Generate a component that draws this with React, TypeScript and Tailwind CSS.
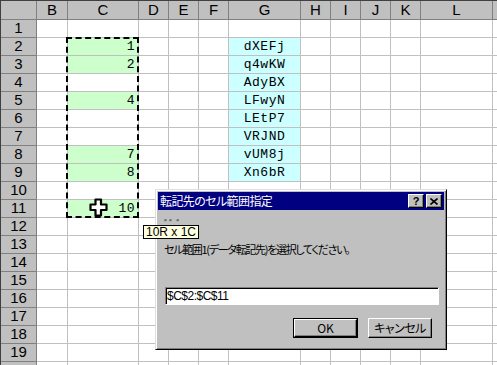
import React from "react";

const cols = ["", "B", "C", "D", "E", "F", "G", "H", "I", "J", "K", "L", ""];
const cData: Record<number, string> = { 2: "1", 3: "2", 5: "4", 8: "7", 9: "8", 11: "10" };
const gData: Record<number, string> = {
  2: "dXEFj",
  3: "q4wKW",
  4: "AdyBX",
  5: "LFwyN",
  6: "LEtP7",
  7: "VRJND",
  8: "vUM8j",
  9: "Xn6bR",
};

const hdrFont = "font-['Liberation_Sans','Noto_Sans_CJK_JP',sans-serif]";
const jpFont = "font-['Noto_Sans_CJK_JP',sans-serif] [font-feature-settings:'palt']";

function Bevel({ children, className = "" }: { children?: React.ReactNode; className?: string }) {
  return (
    <div
      className={`bg-[#c0c0c0] border border-t-white border-l-white border-r-black border-b-black shadow-[inset_-1px_-1px_#808080] flex items-center justify-center ${className}`}
    >
      {children}
    </div>
  );
}

export default function App() {
  const rows = Array.from({ length: 20 }, (_, i) => i + 1);
  return (
    <div className="relative w-[497px] h-[365px] overflow-hidden bg-white">
      <div className="grid grid-cols-[36px_31px_71px_30px_30px_30px_72px_30px_30px_30px_30px_72px_20px] grid-rows-[19px] auto-rows-[18px] border-l border-t border-[#404040]">
        {cols.map((c, i) => (
          <div
            key={"h" + i}
            className={`bg-[#c0c0c0] border-r border-b border-[#808080] flex items-center justify-center text-[15px] text-black ${hdrFont}`}
          >
            {c}
          </div>
        ))}
        {rows.map((r) => (
          <React.Fragment key={r}>
            <div
              className={`bg-[#c0c0c0] border-r border-b border-[#808080] flex items-center justify-center text-[15px] text-black ${hdrFont}`}
            >
              {r}
            </div>
            {cols.slice(1).map((c, ci) => {
              let bg = "bg-white";
              let content: React.ReactNode = null;
              let align = "justify-end pr-[3px]";
              if (c === "C" && cData[r]) {
                bg = "bg-[#ccffcc]";
                content = cData[r];
              }
              if (c === "G" && gData[r]) {
                bg = "bg-[#ccffff]";
                content = gData[r];
                align = "justify-center";
              }
              return (
                <div
                  key={ci}
                  className={`${bg} border-r border-b border-[#c0c0c0] flex items-center ${align} text-[13px] text-black font-['Liberation_Mono',monospace] tracking-[0.5px]`}
                >
                  {content}
                </div>
              );
            })}
          </React.Fragment>
        ))}
      </div>

      {/* marching ants around C2:C11 */}
      <div className="absolute left-[66px] top-[37px] w-[73px] h-[181px] border-2 border-dashed border-black pointer-events-none" />

      {/* cursor */}
      <svg className="absolute left-[89px] top-[198px]" width="19" height="19" viewBox="0 0 19 19">
        <path
          d="M6.5 1.5 H12 V6.5 H17.5 V12 H12 V17.5 H6.5 V12 H1.5 V6.5 H6.5 Z"
          fill="white"
          stroke="black"
          strokeWidth="2.2"
          strokeLinejoin="round"
        />
      </svg>

      {/* dialog */}
      <div className="absolute left-[155px] top-[189px] w-[292px] h-[161px] bg-[#c0c0c0] border border-t-[#dfdfdf] border-l-[#dfdfdf] border-r-black border-b-black shadow-[inset_1px_1px_#fff,inset_-1px_-1px_#808080] p-[2px] flex flex-col">
        <div className="h-[18px] bg-[#000080] flex items-center pl-[2px] pr-[2px]">
          <span className={`text-white text-[12px] leading-none tracking-[-0.6px] ${jpFont}`}>転記先のセル範囲指定</span>
          <div className="ml-auto flex gap-[2px]">
            <Bevel className="w-[16px] h-[14px]">
              <span className="text-[11px] font-bold leading-none text-black font-['Liberation_Sans',sans-serif]">?</span>
            </Bevel>
            <Bevel className="w-[16px] h-[14px]">
              <svg width="8" height="7" viewBox="0 0 8 7">
                <path d="M0.5 0.5 L7.5 6.5 M7.5 0.5 L0.5 6.5" stroke="black" strokeWidth="1.6" />
              </svg>
            </Bevel>
          </div>
        </div>
        <div className="flex flex-col pl-[6px] pr-[7px]">
          <div className={`mt-[9px] h-[12px] text-[10px] leading-none text-black ${jpFont}`}>ﾞﾞ ﾞ</div>
          <div className={`mt-[11px] h-[14px] text-[11px] leading-[14px] tracking-[-1.3px] whitespace-nowrap text-black ${jpFont}`}>
            セル範囲1(データ転記先)を選択してください。
          </div>
          <div className="mt-[31px] ml-[1px] w-[274px] h-[18px] bg-white border border-t-[#808080] border-l-[#808080] border-r-white border-b-white shadow-[inset_1px_1px_#000] flex items-center pl-[1px]">
            <span className="text-[12px] leading-none text-black font-['Liberation_Sans',sans-serif] tracking-[-0.5px]">
              $C$2:$C$11
            </span>
          </div>
          <div className="mt-[13px] flex justify-end gap-[10px] pr-[5px]">
            <div className="border border-black">
              <Bevel className="w-[63px] h-[18px]">
                <span className={`text-[12px] leading-none text-black ${jpFont}`}>OK</span>
              </Bevel>
            </div>
            <Bevel className="w-[64px] h-[20px]">
              <span className={`text-[12px] leading-none tracking-[-0.5px] text-black ${jpFont}`}>キャンセル</span>
            </Bevel>
          </div>
        </div>
      </div>

      {/* tooltip */}
      <div className="absolute left-[143px] top-[225px] h-[14px] px-[2px] bg-[#ffffe1] border border-black flex items-center">
        <span className="text-[12px] leading-none text-black font-['Liberation_Sans',sans-serif]">10R x 1C</span>
      </div>
    </div>
  );
}
